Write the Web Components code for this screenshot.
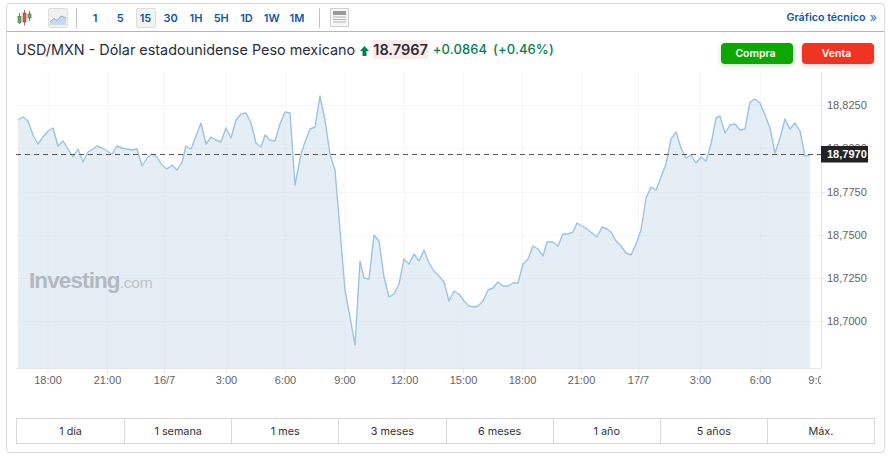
<!DOCTYPE html>
<html lang="es">
<head>
<meta charset="utf-8">
<title>USD/MXN</title>
<style>
    html, body { background: #fff; }
    body { margin: 3px 7px 0 6px; font-family: Inter, "Liberation Sans", sans-serif; }
</style>
</head>
<body>
<chart-card>
    <chart-toolbar slot="toolbar">
        <tf-button>1</tf-button>
        <tf-button>5</tf-button>
        <tf-button active>15</tf-button>
        <tf-button>30</tf-button>
        <tf-button>1H</tf-button>
        <tf-button>5H</tf-button>
        <tf-button>1D</tf-button>
        <tf-button>1W</tf-button>
        <tf-button>1M</tf-button>
    </chart-toolbar>
    <quote-header slot="quote"></quote-header>
    <price-chart slot="chart"></price-chart>
    <range-bar slot="range">
        <range-item>1 día</range-item>
        <range-item>1 semana</range-item>
        <range-item>1 mes</range-item>
        <range-item>3 meses</range-item>
        <range-item>6 meses</range-item>
        <range-item>1 año</range-item>
        <range-item>5 años</range-item>
        <range-item>Máx.</range-item>
    </range-bar>
</chart-card>

<script>
class ChartCard extends HTMLElement {
    constructor() {
        super();
        this.attachShadow({ mode: 'open' });
    }

    connectedCallback() {
        this.shadowRoot.innerHTML = /*html*/`
        <style>
            :host {
                display: flex;
                flex-direction: column;
                box-sizing: border-box;
                width: 879px;
                height: 450px;
                border: 1px solid #d8d8d8;
                border-radius: 4px;
                background: #fff;
            }
        </style>
        <slot name="toolbar"></slot>
        <slot name="quote"></slot>
        <slot name="chart"></slot>
        <slot name="range"></slot>
        `;
    }
}

class ChartToolbar extends HTMLElement {
    constructor() {
        super();
        this.attachShadow({ mode: 'open' });
    }

    connectedCallback() {
        this.shadowRoot.innerHTML = /*html*/`
        <style>
            :host {
                display: flex;
                align-items: center;
                box-sizing: border-box;
                height: 28px;
                padding: 0 7px 0 10px;
                border-bottom: 1px solid #b5b5b5;
            }
            .candles { width: 16px; height: 16px; margin-right: 15px; }
            .line-btn {
                display: flex;
                box-sizing: border-box;
                width: 20px;
                height: 20px;
                border: 1px solid #dcdcdc;
                background: #f1f1f1;
                border-radius: 2px;
            }
            .sep { width: 1px; height: 20px; background: #c4c4c4; }
            .sep.first { margin: 0 8px; }
            .sep.second { margin: 0 10px 0 12px; }
            .times { display: flex; gap: 5.25px; }
            .news { width: 19px; height: 19px; }
            a {
                margin-left: auto;
                display: flex;
                align-items: center;
                gap: 4px;
                color: #1256a0;
                font: 600 10.7px Inter, sans-serif;
                text-decoration: none;
            }
            a span { font-weight: 400; font-size: 13px; line-height: 10px; color: #3f78b5; position: relative; top: -1px; }
        </style>
        <svg class="candles" viewBox="0 0 16 16">
            <path d="M2.500 3V14M7.500 0V15.500M12.500 1V11" fill="none" stroke="#777" stroke-width="1"/>
            <rect x="1" y="6.500" width="3" height="6" fill="#5cb85c" stroke="#4c7a4c" stroke-width=".7"/>
            <rect x="6" y="3" width="3" height="9" fill="#e5544a" stroke="#a04a44" stroke-width=".7"/>
            <rect x="11" y="4" width="3" height="4" fill="#5cb85c" stroke="#4c7a4c" stroke-width=".7"/>
        </svg>
        <span class="line-btn">
            <svg viewBox="0 0 18 18" width="18" height="18">
                <path d="M1 13L5 9.500L8 11.500L12 7L17 9V16H1Z" fill="#c9d8ea"/>
                <path d="M1 13L5 9.500L8 11.500L12 7L17 9" fill="none" stroke="#8fb0d2" stroke-width="1"/>
            </svg>
        </span>
        <span class="sep first"></span>
        <span class="times"><slot></slot></span>
        <span class="sep second"></span>
        <svg class="news" viewBox="0 0 19 19">
            <rect x=".5" y=".5" width="18" height="18" fill="#f6f6f6" stroke="#d0d0d0"/>
            <rect x="3" y="3" width="13" height="4" fill="#999"/>
            <path d="M3 9H16M3 11.500H16M3 14H16" stroke="#b4b4b4" stroke-width="1"/>
        </svg>
        <a href="#">Gráfico técnico <span>»</span></a>
        `;
    }
}

class TfButton extends HTMLElement {
    constructor() {
        super();
        this.attachShadow({ mode: 'open' });
    }

    connectedCallback() {
        this.shadowRoot.innerHTML = /*html*/`
        <style>
            :host {
                display: flex;
                align-items: center;
                justify-content: center;
                box-sizing: border-box;
                width: 20px;
                height: 20px;
                border: 1px solid transparent;
                border-radius: 2px;
                color: #1256a0;
                font: 600 11px Inter, sans-serif;
            }
            :host([active]) {
                background: #f3f3f3;
                border-color: #dcdcdc;
            }
        </style>
        <slot></slot>
        `;
    }
}

class QuoteHeader extends HTMLElement {
    constructor() {
        super();
        this.attachShadow({ mode: 'open' });
    }

    connectedCallback() {
        this.shadowRoot.innerHTML = /*html*/`
        <style>
            :host {
                display: flex;
                align-items: flex-start;
                box-sizing: border-box;
                height: 35px;
                padding: 8px 10px 0 9px;
                font-family: Inter, sans-serif;
            }
            .name { font-size: 14.4px; line-height: 20px; color: #2a2e39; }
            .arrow { width: 9px; height: 10px; margin: 6px 4px 0 5px; }
            .last {
                font-size: 14.5px;
                font-weight: 600;
                line-height: 19px;
                color: #2a2e39;
                background: #fbeae7;
            }
            .change {
                font-size: 13px;
                font-weight: 500;
                line-height: 19px;
                color: #0a7d4f;
                letter-spacing: .1px;
                margin-left: 5px;
            }
            .pct { margin-left: 6px; }
            .actions { display: flex; gap: 9px; margin-left: auto; margin-top: 3px; }
            button {
                width: 72px;
                height: 21px;
                padding: 0 3px 0 0;
                border: 0;
                border-radius: 4px;
                color: #fff;
                font: 600 10.5px Inter, sans-serif;
            }
            .buy { background: #0ea600; box-shadow: 0 2px 5px rgba(14, 166, 0, .25); }
            .sell { background: #ee3524; box-shadow: 0 2px 5px rgba(238, 53, 36, .25); }
        </style>
        <span class="name">USD/MXN - Dólar estadounidense Peso mexicano</span>
        <svg class="arrow" viewBox="0 0 9 10"><path d="M4.500 0L9 5H6.500V10H2.500V5H0Z" fill="#0a7d4f"/></svg>
        <span class="last">18.7967</span>
        <span class="change">+0.0864</span>
        <span class="change pct">(+0.46%)</span>
        <div class="actions">
            <button class="buy">Compra</button>
            <button class="sell">Venta</button>
        </div>
        `;
    }
}

// puntos leidos de la grafica, en coordenadas de pagina
const LINE = [
    [18,120],[23,117],[28,121],[33,135],[38,144],[43,137],[48,131],[53,128],[58,146],[63,141],[68,149],[73,157],
    [78,149],[83,162],[88,152],[93,149],[97,146],[102,148],[107,151],[112,154],[117,146],[122,148],[127,149],[132,150],
    [137,149],[142,166],[147,158],[152,154],[157,157],[162,165],[167,169],[172,165],[177,170],[182,162],[186,146],[191,149],
    [196,136],[201,123],[206,144],[211,137],[216,140],[221,142],[226,128],[231,138],[236,120],[241,114],[246,113],[251,123],
    [256,143],[261,147],[265,135],[270,140],[275,141],[280,124],[285,112],[290,113],[295,185],[301,154],[305,142],[310,129],
    [315,127],[320,96],[325,120],[330,154],[335,170],[340,230],[345,290],[350,317],[355,345],[360,261],[364,278],[369,279],
    [374,235],[379,241],[384,277],[389,297],[394,294],[399,284],[404,259],[409,264],[414,254],[419,261],[424,250],[429,263],
    [434,271],[439,276],[444,282],[449,301],[454,291],[459,294],[464,301],[469,306],[474,307],[478,306],[483,301],[488,290],
    [493,288],[498,282],[503,286],[508,286],[513,283],[518,283],[523,264],[528,259],[533,246],[538,249],[543,256],[547,242],
    [553,242],[558,246],[563,234],[568,234],[573,232],[577,223],[582,226],[587,229],[592,233],[597,237],[602,227],[607,229],
    [611,232],[616,241],[621,246],[626,253],[631,255],[636,244],[641,230],[646,198],[651,187],[656,190],[661,177],[666,164],
    [671,139],[676,132],[681,148],[686,158],[691,155],[696,163],[701,157],[706,161],[711,144],[716,118],[720,116],[725,133],
    [730,125],[735,124],[740,130],[745,129],[750,102],[755,99],[760,103],[765,115],[770,128],[775,153],[780,138],[785,119],
    [790,129],[795,123],[800,131],[805,156],[810,155]
];

class PriceChart extends HTMLElement {
    constructor() {
        super();
        this.attachShadow({ mode: 'open' });
    }

    connectedCallback() {
        const bottom = 368.5;
        const points = LINE.map(p => p.join(',')).join(' ');
        const verticals = [48, 107.5, 164.5, 226.5, 285.5, 345, 404.5, 463.5, 522.5, 581.5, 638.5, 700.5, 760.5];
        const horizontals = [105.5, 148.5, 192.5, 235.5, 278.5, 321.5];
        const times = ['18:00', '21:00', '16/7', '3:00', '6:00', '9:00', '12:00', '15:00', '18:00', '21:00', '17/7', '3:00', '6:00'];
        const prices = [[105, '18,8250'], [148, '18,8000'], [192, '18,7750'], [235, '18,7500'], [278, '18,7250'], [321, '18,7000']];

        this.shadowRoot.innerHTML = /*html*/`
        <style>
            :host { display: block; height: 320px; margin-left: -1px; }
            svg { display: block; width: 880px; height: 320px; }
            text { font-family: "Liberation Sans", Arial, sans-serif; font-size: 11px; }
            .axis text { fill: #636363; }
        </style>
        <svg viewBox="6 67 880 320">
            <defs><clipPath id="plot"><rect x="16" y="67" width="805" height="320"/></clipPath></defs>
            <g stroke="#f5f6f8" stroke-width="1">
                ${verticals.map(x => `<line x1="${x}" x2="${x}" y1="72" y2="${bottom}"/>`).join('')}
                ${horizontals.map(y => `<line x1="16" x2="821" y1="${y}" y2="${y}"/>`).join('')}
            </g>
            <polygon points="18,${bottom} ${points} 810,${bottom}" fill="#cfdfec" fill-opacity=".55"/>
            <polyline points="${points}" fill="none" stroke="#9cc4e0" stroke-width="1.4" stroke-linejoin="round"/>
            <g stroke="#e4e6e9" stroke-width="1">
                <line x1="16" x2="821" y1="${bottom}" y2="${bottom}"/>
                <line x1="821.5" x2="821.5" y1="72" y2="${bottom}"/>
                ${verticals.map(x => `<line x1="${x}" x2="${x}" y1="${bottom}" y2="373"/>`).join('')}
                ${prices.map(p => `<line x1="821" x2="825" y1="${p[0] + .5}" y2="${p[0] + .5}"/>`).join('')}
            </g>
            <g class="axis" text-anchor="middle" clip-path="url(#plot)">
                ${times.map((t, i) => `<text x="${verticals[i]}" y="384">${t}</text>`).join('')}
                <text x="819" y="384">9:00</text>
            </g>
            <g class="axis">
                ${prices.map(p => `<text x="827" y="${p[0] + 4}">${p[1]}</text>`).join('')}
            </g>
            <text x="29" y="288" style="font-size:22.500px;font-weight:700;letter-spacing:-.9px" fill="#b4b9be">Investing<tspan style="font-size:15.500px;font-weight:400;letter-spacing:-.2px" fill="#bfc3c7">.com</tspan></text>
            <line x1="16" x2="821" y1="154.500" y2="154.500" stroke="#5a5a5a" stroke-width="1" stroke-dasharray="5 4"/>
            <rect x="821" y="146" width="47" height="16.500" fill="#222"/>
            <text x="827" y="158" fill="#fff" style="font-weight:700">18,7970</text>
        </svg>
        `;
    }
}

class RangeBar extends HTMLElement {
    constructor() {
        super();
        this.attachShadow({ mode: 'open' });
    }

    connectedCallback() {
        this.shadowRoot.innerHTML = /*html*/`
        <style>
            :host {
                display: grid;
                grid-template-columns: repeat(8, 1fr);
                box-sizing: border-box;
                height: 26px;
                margin: 31px 9px 0 9px;
                border: 1px solid #d8d8d8;
            }
        </style>
        <slot></slot>
        `;
    }
}

class RangeItem extends HTMLElement {
    constructor() {
        super();
        this.attachShadow({ mode: 'open' });
    }

    connectedCallback() {
        this.shadowRoot.innerHTML = /*html*/`
        <style>
            :host {
                display: flex;
                align-items: center;
                justify-content: center;
                color: #333;
                font: 400 10.8px Inter, sans-serif;
                border-left: 1px solid #d8d8d8;
            }
            :host(:first-child) { border-left: 0; }
        </style>
        <slot></slot>
        `;
    }
}

customElements.define('chart-card', ChartCard);
customElements.define('chart-toolbar', ChartToolbar);
customElements.define('tf-button', TfButton);
customElements.define('quote-header', QuoteHeader);
customElements.define('price-chart', PriceChart);
customElements.define('range-bar', RangeBar);
customElements.define('range-item', RangeItem);
</script>
</body>
</html>
